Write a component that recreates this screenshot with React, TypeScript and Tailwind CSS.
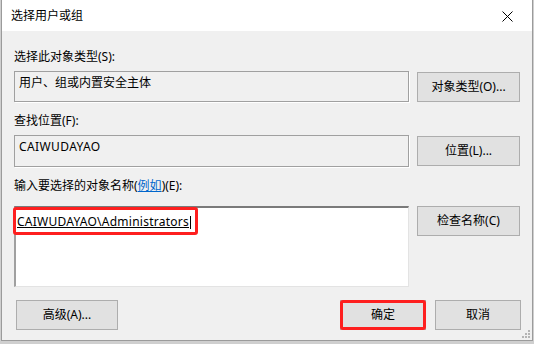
import React from 'react';

const font = "font-['Noto_Sans','Noto_Sans_CJK_SC',sans-serif]";

function Button({ label, className = '' }: { label: string; className?: string }) {
  return (
    <div
      className={`flex h-[30px] items-center justify-center border border-[#adadad] bg-[#e1e1e1] text-[12px] text-black ${className}`}
    >
      {label}
    </div>
  );
}

function ReadBox({ text, className = '' }: { text: string; className?: string }) {
  return (
    <div
      className={`w-[395px] border border-[#a0a0a0] bg-[#f0f0f0] pl-[4px] text-[12px] leading-[16px] text-black shadow-[1px_1px_0_#ffffff] ${className}`}
    >
      {text}
    </div>
  );
}

export default function App() {
  return (
    <div className={`h-[344px] w-[534px] overflow-hidden bg-[#cfcfcf] ${font}`}>
      <div className="relative ml-[1px] h-[341px] w-[532px] border-x border-b border-[#9b9b9b] bg-[#f0f0f0]">
        {/* Title bar */}
        <div className="flex h-[31px] items-center justify-between bg-white pl-[9px] pr-[19px]">
          <span className="text-[12px] text-black">选择用户或组</span>
          <svg width="11" height="11" viewBox="0 0 11 11" className="mt-[1px]">
            <path d="M0.5 0.5 L10.5 10.5 M10.5 0.5 L0.5 10.5" stroke="#000" strokeWidth="1" />
          </svg>
        </div>

        <div className="pl-[12px] pr-[11px]">
          <div className="mt-[18px] h-[16px] text-[12px] leading-[16px] text-black">选择此对象类型(S):</div>
          <div className="mt-[6px] flex items-start gap-[8px]">
            <ReadBox text="用户、组或内置安全主体" className="h-[31px] pt-[3px]" />
            <Button label="对象类型(O)..." className="mt-[1px] w-[103px]" />
          </div>

          <div className="mt-[11px] h-[16px] text-[12px] leading-[16px] text-black">查找位置(F):</div>
          <div className="mt-[6px] flex items-start gap-[8px]">
            <ReadBox text="CAIWUDAYAO" className="h-[32px] pt-[3px] tracking-[0.4px]" />
            <Button label="位置(L)..." className="mt-[1px] w-[103px]" />
          </div>

          <div className="mt-[11px] h-[16px] text-[12px] leading-[16px] text-black">
            输入要选择的对象名称(<span className="text-[#0066cc] underline">例如</span>)(E):
          </div>
          <div className="mt-[12px] flex items-start gap-[8px]">
            <div className="relative h-[81px] w-[395px] border-t-2 border-l-2 border-r border-b border-t-[#7a7a7a] border-l-[#a0a0a0] border-r-[#e3e3e3] border-b-[#e3e3e3] bg-white">
              <div className="flex items-center pl-[1px] pt-[6px] text-[12px] leading-[16px] text-black">
                <span className="underline tracking-[0.25px]">CAIWUDAYAO\Administrators</span>
                <span className="ml-[1px] h-[13px] w-[1px] bg-black" />
              </div>
              <div className="absolute left-[-3px] top-[-1px] h-[28px] w-[185px] rounded-[3px] border-[3px] border-[#fe1f1f]" />
            </div>
            <Button label="检查名称(C)" className="w-[103px]" />
          </div>

          <div className="mt-[13px] flex items-start">
            <Button label="高级(A)..." className="ml-[2px] w-[102px]" />
            <div className="flex-1" />
            <div className="relative">
              <Button label="确定" className="w-[86px]" />
              <div className="absolute inset-0 rounded-[3px] border-[3px] border-[#fe1f1f]" />
            </div>
            <Button label="取消" className="ml-[9px] w-[86px]" />
          </div>
        </div>

        {/* Resize grip */}
        <svg width="10" height="10" viewBox="0 0 10 10" className="absolute bottom-[1px] right-[1px]">
          <rect x="7" y="1" width="2" height="2" fill="#b4b4b4" />
          <rect x="4" y="4" width="2" height="2" fill="#b4b4b4" />
          <rect x="7" y="4" width="2" height="2" fill="#b4b4b4" />
          <rect x="1" y="7" width="2" height="2" fill="#b4b4b4" />
          <rect x="4" y="7" width="2" height="2" fill="#b4b4b4" />
          <rect x="7" y="7" width="2" height="2" fill="#b4b4b4" />
        </svg>
      </div>
    </div>
  );
}
